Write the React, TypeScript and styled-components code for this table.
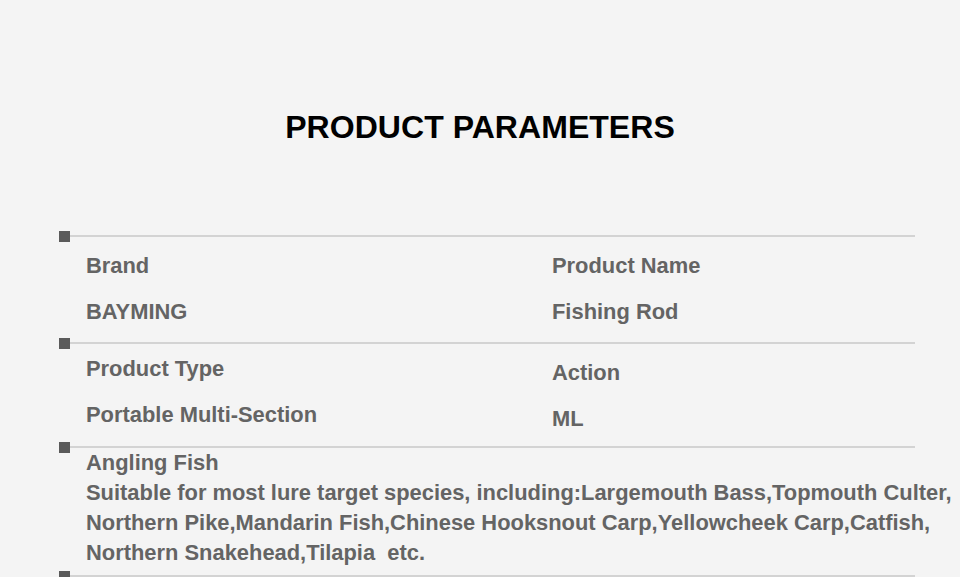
import React from "react";
import styled, { createGlobalStyle } from "styled-components";

const GlobalStyle = createGlobalStyle`
  html, body {
    margin: 0;
    padding: 0;
    background: #f4f4f4;
  }
  body {
    font-family: "Liberation Sans", Arial, sans-serif;
  }
`;

const Page = styled.div`
  width: 960px;
  height: 577px;
  overflow: hidden;
  background: #f4f4f4;
  display: flex;
  flex-direction: column;
  align-items: flex-start;
`;

const Title = styled.h1`
  align-self: stretch;
  margin: 111px 0 0;
  text-align: center;
  font-family: "Liberation Sans", Arial, sans-serif;
  font-weight: 700;
  font-size: 32px;
  line-height: 32px;
  color: #000;
  letter-spacing: 0.05px;
`;

const Table = styled.div`
  margin: 92px 0 0 59px;
  width: 856px;
  display: flex;
  flex-direction: column;
`;

const Divider = styled.div`
  display: flex;
  align-items: center;
  height: 2px;
`;

const Square = styled.span`
  flex-shrink: 0;
  width: 11px;
  height: 11px;
  background: #5a5a5a;
`;

const Line = styled.span`
  flex: 1;
  height: 2px;
  background: #d3d3d3;
`;

const Grid = styled.div<{ $pt: number; $pb: number }>`
  display: grid;
  grid-template-columns: 466px 1fr;
  padding: ${(p) => p.$pt}px 0 ${(p) => p.$pb}px 27px;
`;

const Cell = styled.div<{ $shift?: number }>`
  display: flex;
  flex-direction: column;
  gap: 6px;
  padding-top: ${(p) => p.$shift ?? 0}px;
`;

const Text = styled.div`
  font-size: 21.9px;
  font-weight: 700;
  line-height: 40px;
  color: #646464;
  white-space: nowrap;
`;

const Block = styled.div`
  padding: 0 0 7px 27px;
  font-size: 21.9px;
  font-weight: 700;
  line-height: 30px;
  color: #646464;
  white-space: nowrap;
`;

type Pair = { label: string; value: string };

const rows: { left: Pair; right: Pair; pt: number; pb: number; rightShift: number }[] = [
  {
    left: { label: "Brand", value: "BAYMING" },
    right: { label: "Product Name", value: "Fishing Rod" },
    pt: 9,
    pb: 10,
    rightShift: 0,
  },
  {
    left: { label: "Product Type", value: "Portable Multi-Section" },
    right: { label: "Action", value: "ML" },
    pt: 5,
    pb: 7,
    rightShift: 4,
  },
];

export default function App() {
  return (
    <>
      <GlobalStyle />
      <Page>
        <Title>PRODUCT PARAMETERS</Title>
        <Table>
          {rows.map((r) => (
            <React.Fragment key={r.left.label}>
              <Divider>
                <Square />
                <Line />
              </Divider>
              <Grid $pt={r.pt} $pb={r.pb}>
                <Cell>
                  <Text>{r.left.label}</Text>
                  <Text>{r.left.value}</Text>
                </Cell>
                <Cell $shift={r.rightShift}>
                  <Text>{r.right.label}</Text>
                  <Text>{r.right.value}</Text>
                </Cell>
              </Grid>
            </React.Fragment>
          ))}
          <Divider>
            <Square />
            <Line />
          </Divider>
          <Block>
            Angling Fish
            <br />
            Suitable for most lure target species, including:Largemouth Bass,Topmouth Culter,
            <br />
            Northern Pike,Mandarin Fish,Chinese Hooksnout Carp,Yellowcheek Carp,Catfish,
            <br />
            Northern Snakehead,Tilapia&nbsp; etc.
          </Block>
          <Divider>
            <Square />
            <Line />
          </Divider>
        </Table>
      </Page>
    </>
  );
}
